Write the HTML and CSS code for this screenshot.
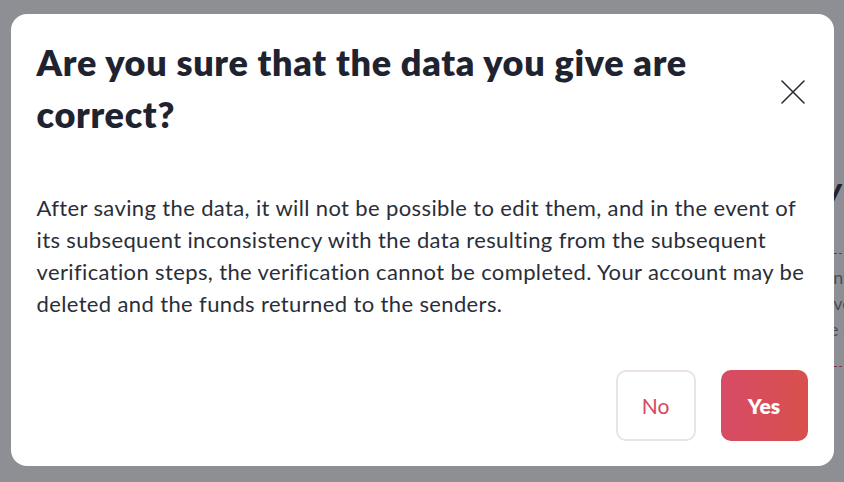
FILE: index.html
```html
<!DOCTYPE html>
<html>
<head>
    <title>Confirm data</title>
    <link rel="stylesheet" href="styles.css">
</head>
<body>
    <div class="page">
        <h2 class="page-title">Verification</h2>
        <div class="page-box">
            <p>information</p>
            <p>&nbsp;verify</p>
            <p>e m</p>
        </div>
    </div>

    <div class="overlay">
        <div class="modal">
            <div class="modal-head">
                <h1>Are you sure that the data you give are correct?</h1>
                <button type="button" class="close-btn" aria-label="Close">
                    <svg width="24" height="24" viewBox="0 0 24 24" fill="none" stroke="#2a2d37" stroke-width="1.6" stroke-linecap="round">
                        <path d="M1 1 L23 23 M23 1 L1 23"/>
                    </svg>
                </button>
            </div>
            <p class="modal-text">After saving the data, it will not be possible to edit them, and in the event of its subsequent inconsistency with the data resulting from the subsequent verification steps, the verification cannot be completed. Your account may be deleted and the funds returned to the senders.</p>
            <div class="modal-actions">
                <button type="button" class="btn btn-no">No</button>
                <button type="button" class="btn btn-yes">Yes</button>
            </div>
        </div>
    </div>
</body>
</html>
```

FILE: styles.css
```css
body {
    background-color: #ffffff;
    font-family: Lato, "Open Sans", sans-serif;
    margin: 0;
    padding: 0;
    width: 844px;
    height: 482px;
    overflow: hidden;
}

.page {
    padding: 176px 0 0 821px;
}

.page-title {
    margin: 0;
    font-size: 30px;
    line-height: 36px;
    font-weight: 900;
    font-style: italic;
    letter-spacing: 12px;
    color: #1f2330;
    white-space: nowrap;
}

.page-box {
    margin: 41px 0 0 8px;
    width: 400px;
    border-top: 1px dashed #e0455a;
    border-bottom: 1px dashed #e0455a;
    padding: 10px 0 24px 0;
}

.page-box p {
    margin: 0;
    font-size: 18px;
    line-height: 26px;
    color: #7a7a7a;
    white-space: nowrap;
}

.overlay {
    position: fixed;
    inset: 0;
    background-color: rgba(31, 35, 48, 0.51);
    display: flex;
    justify-content: center;
    align-items: flex-start;
}

.modal {
    margin-top: 14px;
    width: 823px;
    height: 452px;
    box-sizing: border-box;
    background-color: #fff;
    border-radius: 16px;
    padding: 22px 26px 25px 26px;
    display: flex;
    flex-direction: column;
}

.modal-head {
    display: flex;
    justify-content: space-between;
    align-items: flex-start;
}

.modal-head h1 {
    margin: 0;
    max-width: 700px;
    font-size: 36px;
    line-height: 52px;
    font-weight: 800;
    letter-spacing: 0.7px;
    color: #1f2330;
}

.close-btn {
    margin-top: 41px;
    width: 30px;
    height: 30px;
    padding: 0;
    border: none;
    background: none;
    display: flex;
    align-items: center;
    justify-content: center;
    cursor: pointer;
}

.modal-text {
    margin: 52px -10px 0 0;
    font-size: 22px;
    line-height: 32px;
    letter-spacing: 0.37px;
    color: #2a2e39;
}

.modal-actions {
    margin-top: auto;
    display: flex;
    justify-content: flex-end;
    gap: 25px;
}

.btn {
    height: 71px;
    border-radius: 10px;
    font-family: inherit;
    font-size: 21px;
    cursor: pointer;
}

.btn-no {
    width: 80px;
    background-color: #fff;
    border: 2px solid #ebe2e3;
    color: #d64a5d;
}

.btn-yes {
    width: 87px;
    border: none;
    background: linear-gradient(90deg, #d74b66, #d8504c);
    color: #fff;
    font-weight: 800;
}
```
